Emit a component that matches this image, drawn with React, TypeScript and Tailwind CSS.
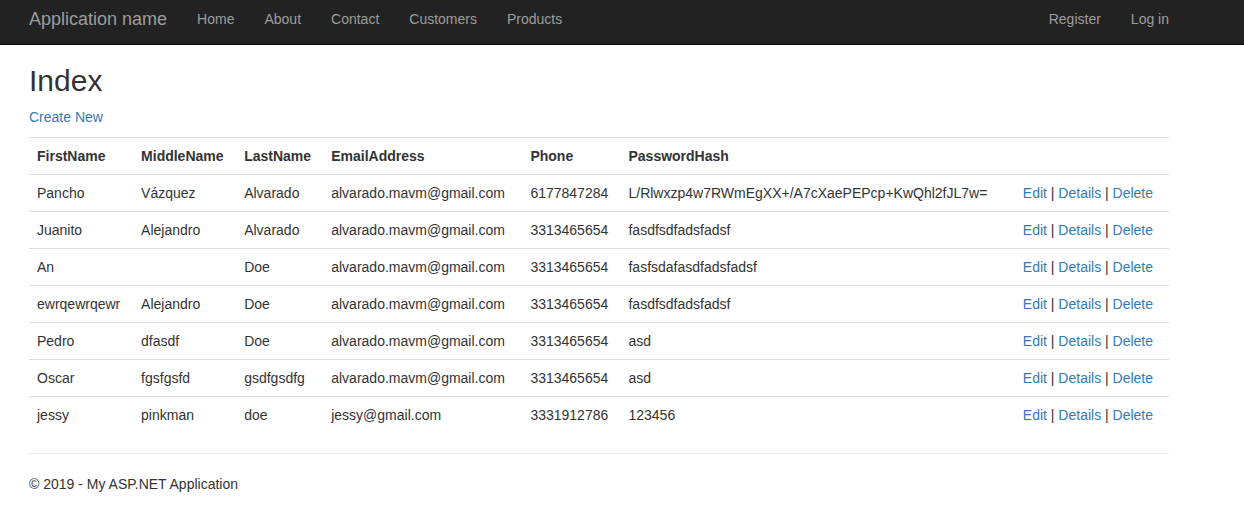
import React from "react";

const rows = [
  ["Pancho", "Vázquez", "Alvarado", "alvarado.mavm@gmail.com", "6177847284", "L/Rlwxzp4w7RWmEgXX+/A7cXaePEPcp+KwQhl2fJL7w="],
  ["Juanito", "Alejandro", "Alvarado", "alvarado.mavm@gmail.com", "3313465654", "fasdfsdfadsfadsf"],
  ["An", "", "Doe", "alvarado.mavm@gmail.com", "3313465654", "fasfsdafasdfadsfadsf"],
  ["ewrqewrqewr", "Alejandro", "Doe", "alvarado.mavm@gmail.com", "3313465654", "fasdfsdfadsfadsf"],
  ["Pedro", "dfasdf", "Doe", "alvarado.mavm@gmail.com", "3313465654", "asd"],
  ["Oscar", "fgsfgsfd", "gsdfgsdfg", "alvarado.mavm@gmail.com", "3313465654", "asd"],
  ["jessy", "pinkman", "doe", "jessy@gmail.com", "3331912786", "123456"],
];

const headers = ["FirstName", "MiddleName", "LastName", "EmailAddress", "Phone", "PasswordHash", ""];
const widths = ["w-[104px]", "w-[103px]", "w-[87px]", "w-[199px]", "w-[98px]", "w-[394px]", "w-[154px]"];

export default function App() {
  return (
    <div className="min-h-[510px] bg-white text-[14px] leading-[20px] text-[#333]" style={{ fontFamily: '"Liberation Sans", Arial, sans-serif' }}>
      <div className="h-[45px] bg-[#222] border-b border-[#080808]">
        <div className="ml-[29px] w-[1140px] flex items-start justify-between">
          <div className="flex items-start">
            <a className="pt-[9px] pb-[15px] pr-[15px] text-[18px] leading-[20px] text-[#9d9d9d]">Application name</a>
            <nav className="flex">
              {["Home", "About", "Contact", "Customers", "Products"].map((l) => (
                <a key={l} className="px-[15px] pt-[9px] pb-[15px] text-[#9d9d9d]">{l}</a>
              ))}
            </nav>
          </div>
          <nav className="flex">
            <a className="px-[15px] pt-[9px] pb-[15px] text-[#9d9d9d]">Register</a>
            <a className="pl-[15px] pt-[9px] pb-[15px] text-[#9d9d9d]">Log in</a>
          </nav>
        </div>
      </div>
      <div className="ml-[29px] w-[1140px]">
        <h2 className="mt-[19px] mb-[10px] text-[30px] leading-[33px] font-medium text-[#333]">Index</h2>
        <p className="mb-[10px]">
          <a className="text-[#337ab7]">Create New</a>
        </p>
        <table className="w-[1140px] table-fixed border-collapse">
          <tbody>
            <tr>
              {headers.map((h, i) => (
                <th key={i} className={`${widths[i]} border-t border-[#ddd] p-[8px] text-left font-bold align-top`}>{h}</th>
              ))}
            </tr>
            {rows.map((r, ri) => (
              <tr key={ri}>
                {r.map((c, ci) => (
                  <td key={ci} className="border-t border-[#ddd] p-[8px] align-top whitespace-nowrap">{c}</td>
                ))}
                <td className="border-t border-[#ddd] p-[8px] align-top whitespace-nowrap">
                  <a className="text-[#337ab7]">Edit</a> | <a className="text-[#337ab7]">Details</a> | <a className="text-[#337ab7]">Delete</a>
                </td>
              </tr>
            ))}
          </tbody>
        </table>
        <hr className="mt-[20px] mb-[20px] border-0 border-t border-[#eee]" />
        <footer>
          <p>© 2019 - My ASP.NET Application</p>
        </footer>
      </div>
    </div>
  );
}
